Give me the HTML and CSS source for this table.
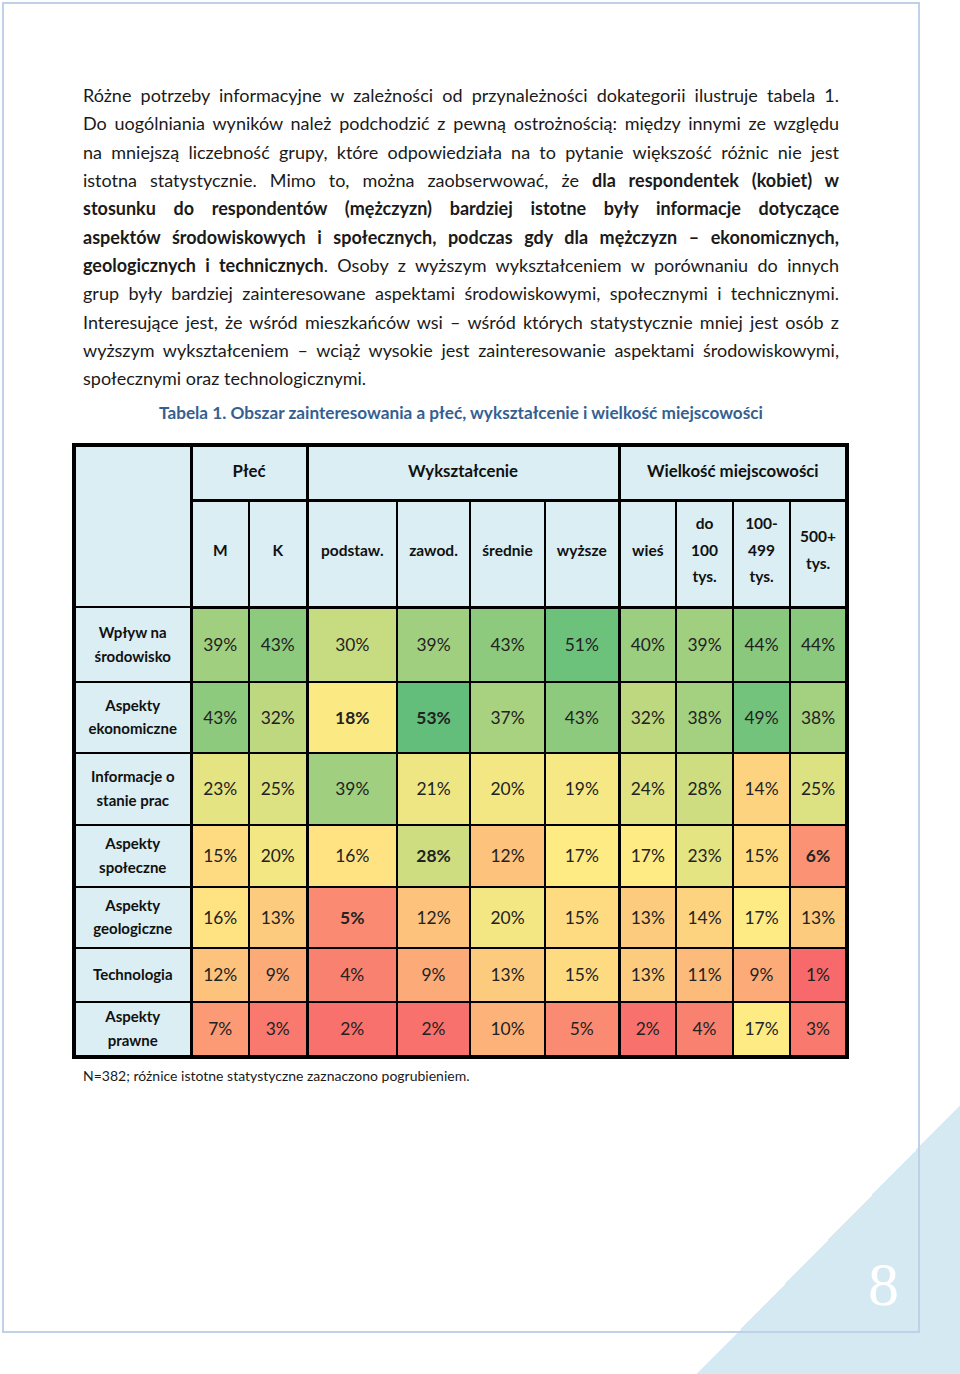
FILE: index.html
```html
<!DOCTYPE html>
<html lang="pl">
<head>
<meta charset="utf-8">
<title>Tabela 1</title>
<link rel="stylesheet" href="styles.css">
</head>
<body>
<div class="sheet">
  <div class="page">
    <div class="para">
      <span class="ln">Różne potrzeby informacyjne w zależności od przynależności dokategorii ilustruje tabela 1.</span>
      <span class="ln">Do uogólniania wyników należ podchodzić z pewną ostrożnością: między innymi ze względu</span>
      <span class="ln">na mniejszą liczebność grupy, które odpowiedziała na to pytanie większość różnic nie jest</span>
      <span class="ln">istotna statystycznie. Mimo to, można zaobserwować, że <b>dla respondentek (kobiet) w</b></span>
      <span class="ln"><b>stosunku do respondentów (mężczyzn) bardziej istotne były informacje dotyczące</b></span>
      <span class="ln"><b>aspektów środowiskowych i społecznych, podczas gdy dla mężczyzn – ekonomicznych,</b></span>
      <span class="ln"><b>geologicznych i technicznych</b>. Osoby z wyższym wykształceniem w porównaniu do innych</span>
      <span class="ln">grup były bardziej zainteresowane aspektami środowiskowymi, społecznymi i technicznymi.</span>
      <span class="ln">Interesujące jest, że wśród mieszkańców wsi – wśród których statystycznie mniej jest osób z</span>
      <span class="ln">wyższym wykształceniem – wciąż wysokie jest zainteresowanie aspektami środowiskowymi,</span>
      <span class="ln last">społecznymi oraz technologicznymi.</span>
    </div>
    <p class="caption">Tabela 1. Obszar zainteresowania a płeć, wykształcenie i wielkość miejscowości</p>
    <table class="heat">
      <colgroup>
        <col class="c-label"><col class="c-m"><col class="c-k"><col class="c-pod"><col class="c-zaw"><col class="c-sre"><col class="c-wyz"><col class="c-wies"><col class="c-do"><col class="c-100"><col class="c-500">
      </colgroup>
      <tr class="r-h1">
        <td class="lab gl" rowspan="2"></td>
        <th colspan="2" class="gl">Płeć</th>
        <th colspan="4" class="gl">Wykształcenie</th>
        <th colspan="4" class="gl">Wielkość miejscowości</th>
      </tr>
      <tr class="r-h2">
        <th class="gl">M</th><th>K</th>
        <th class="gl">podstaw.</th><th>zawod.</th><th>średnie</th><th>wyższe</th>
        <th class="gl">wieś</th><th>do<br>100<br>tys.</th><th>100-<br>499<br>tys.</th><th>500+<br>tys.</th>
      </tr>
      <tr class="r1 first">
        <td class="lab">Wpływ na<br>środowisko</td>
        <td class="gl" style="background:#a0cf7f">39%</td><td style="background:#8eca7d">43%</td>
        <td class="gl" style="background:#c7db81">30%</td><td style="background:#a0cf7f">39%</td><td style="background:#8eca7d">43%</td><td style="background:#6cc17b">51%</td>
        <td class="gl" style="background:#9bce7e">40%</td><td style="background:#a0cf7f">39%</td><td style="background:#8ac97d">44%</td><td style="background:#8ac97d">44%</td>
      </tr>
      <tr class="r2">
        <td class="lab">Aspekty<br>ekonomiczne</td>
        <td class="gl" style="background:#8eca7d">43%</td><td style="background:#bed880">32%</td>
        <td class="gl b" style="background:#fbea84">18%</td><td class="b" style="background:#63be7b">53%</td><td style="background:#a8d27f">37%</td><td style="background:#8eca7d">43%</td>
        <td class="gl" style="background:#bed880">32%</td><td style="background:#a4d17f">38%</td><td style="background:#74c37c">49%</td><td style="background:#a4d17f">38%</td>
      </tr>
      <tr class="r3">
        <td class="lab">Informacje o<br>stanie prac</td>
        <td class="gl" style="background:#e5e483">23%</td><td style="background:#dce182">25%</td>
        <td class="gl" style="background:#a0cf7f">39%</td><td style="background:#eee683">21%</td><td style="background:#f2e783">20%</td><td style="background:#f6e884">19%</td>
        <td class="gl" style="background:#e1e282">24%</td><td style="background:#cfdd81">28%</td><td style="background:#fed37f">14%</td><td style="background:#dce182">25%</td>
      </tr>
      <tr class="r4">
        <td class="lab">Aspekty<br>społeczne</td>
        <td class="gl" style="background:#fedb81">15%</td><td style="background:#f2e783">20%</td>
        <td class="gl" style="background:#ffe382">16%</td><td class="b" style="background:#cfdd81">28%</td><td style="background:#fdc27c">12%</td><td style="background:#ffeb84">17%</td>
        <td class="gl" style="background:#ffeb84">17%</td><td style="background:#e5e483">23%</td><td style="background:#fedb81">15%</td><td class="b" style="background:#fa9273">6%</td>
      </tr>
      <tr class="r5">
        <td class="lab">Aspekty<br>geologiczne</td>
        <td class="gl" style="background:#ffe382">16%</td><td style="background:#fdcb7e">13%</td>
        <td class="gl b" style="background:#fa8a71">5%</td><td style="background:#fdc27c">12%</td><td style="background:#f2e783">20%</td><td style="background:#fedb81">15%</td>
        <td class="gl" style="background:#fdcb7e">13%</td><td style="background:#fed37f">14%</td><td style="background:#ffeb84">17%</td><td style="background:#fdcb7e">13%</td>
      </tr>
      <tr class="r6">
        <td class="lab">Technologia</td>
        <td class="gl" style="background:#fdc27c">12%</td><td style="background:#fcaa78">9%</td>
        <td class="gl" style="background:#f98170">4%</td><td style="background:#fcaa78">9%</td><td style="background:#fdcb7e">13%</td><td style="background:#fedb81">15%</td>
        <td class="gl" style="background:#fdcb7e">13%</td><td style="background:#fcba7b">11%</td><td style="background:#fcaa78">9%</td><td style="background:#f8696b">1%</td>
      </tr>
      <tr class="r7">
        <td class="lab">Aspekty<br>prawne</td>
        <td class="gl" style="background:#fb9a74">7%</td><td style="background:#f9796e">3%</td>
        <td class="gl" style="background:#f8716d">2%</td><td style="background:#f8716d">2%</td><td style="background:#fcb279">10%</td><td style="background:#fa8a71">5%</td>
        <td class="gl" style="background:#f8716d">2%</td><td style="background:#f98170">4%</td><td style="background:#ffeb84">17%</td><td style="background:#f9796e">3%</td>
      </tr>
    </table>
    <p class="note">N=382; różnice istotne statystyczne zaznaczono pogrubieniem.</p>
  </div>
  <div class="pagenum">8</div>
</div>
</body>
</html>
```

FILE: styles.css
```css
html, body {
  margin: 0;
  padding: 0;
  background: #ffffff;
}

.sheet {
  position: relative;
  width: 960px;
  height: 1374px;
  padding-top: 2px;
  box-sizing: border-box;
  background: linear-gradient(to bottom right, rgba(212, 233, 242, 0) 50%, #d4e9f2 50%) no-repeat right bottom / 263px 269px;
  font-family: Lato, "Noto Sans", sans-serif;
  color: #1a1a1a;
}

.page {
  margin-left: 2px;
  width: 918px;
  height: 1331px;
  border: 2px solid #bfd1e8;
  box-sizing: border-box;
  padding-top: 77px;
}

.para {
  margin-left: 79px;
  width: 756px;
  font-size: 18px;
  line-height: 28.35px;
}

.ln {
  display: block;
  text-align: justify;
  text-align-last: justify;
}

.ln.last {
  text-align-last: left;
}

.para b {
  font-weight: 700;
}

.caption {
  margin: 9px 0 0 79px;
  width: 756px;
  text-align: center;
  font-size: 17.2px;
  font-weight: 700;
  color: #365f91;
  line-height: 22px;
}

.heat {
  margin: 19px 0 0 68px;
  width: 773px;
  table-layout: fixed;
  border-collapse: collapse;
  border: 4px solid #000;
}

.c-label { width: 117px; }
.c-m { width: 58px; }
.c-k { width: 58px; }
.c-pod { width: 90px; }
.c-zaw { width: 73px; }
.c-sre { width: 75px; }
.c-wyz { width: 74px; }
.c-wies { width: 57px; }
.c-do { width: 57px; }
.c-100 { width: 57px; }
.c-500 { width: 57px; }

.heat th,
.heat td {
  border: 2px solid #000;
  padding: 0;
  text-align: center;
  vertical-align: middle;
}

.heat th {
  background: #daeef3;
  font-weight: 700;
  color: #111;
}

.heat .gl {
  border-left: 3px solid #000;
}

.r-h1 th {
  font-size: 16.8px;
  height: 48px;
  padding-bottom: 4px;
  border-bottom: 3px solid #000;
}

.r-h2 th {
  font-size: 15.5px;
  line-height: 26.5px;
  height: 96px;
  padding-bottom: 8px;
  border-bottom: 3px solid #000;
}

.heat td {
  font-size: 17.4px;
  color: #222;
}

.heat td.b {
  font-weight: 700;
}

.heat td.lab {
  background: #daeef3;
  font-size: 15px;
  font-weight: 700;
  line-height: 23.5px;
  color: #111;
  border-left: 4px solid #000;
}

.r1 td { height: 72px; }
.r2 td { height: 69px; }
.r3 td { height: 70px; }
.r4 td { height: 60px; }
.r5 td { height: 59px; }
.r6 td { height: 52px; }
.r7 td { height: 52px; }

.note {
  margin: 8px 0 0 79px;
  font-size: 14px;
  line-height: 18px;
  color: #1a1a1a;
}

.pagenum {
  position: absolute;
  left: 868px;
  top: 1253px;
  font-family: "Liberation Serif", "DejaVu Serif", serif;
  font-size: 62px;
  line-height: 62px;
  color: #ffffff;
}
```
